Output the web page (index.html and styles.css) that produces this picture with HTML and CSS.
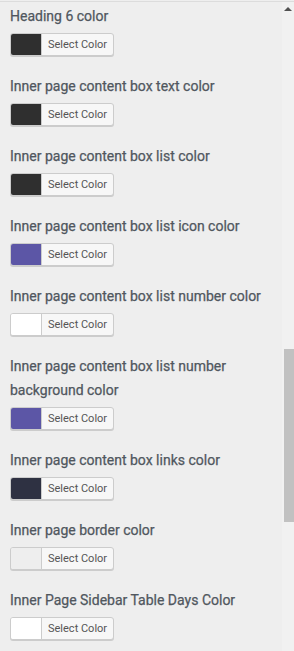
FILE: index.html
```html
<!DOCTYPE html>
<html lang="en">
<head>
<meta charset="UTF-8">
<meta name="viewport" content="width=device-width, initial-scale=1.0">
<title>Customizer Colors</title>
<link rel="stylesheet" href="styles.css">
</head>
<body>
<div class="panel">
  <div class="controls">
    <div class="control">
      <span class="control-title">Heading 6 color</span>
      <button class="color-result"><span class="swatch" style="background:#2f2f2f"></span><span class="result-text">Select Color</span></button>
    </div>
    <div class="control">
      <span class="control-title">Inner page content box text color</span>
      <button class="color-result"><span class="swatch" style="background:#2f2f2f"></span><span class="result-text">Select Color</span></button>
    </div>
    <div class="control">
      <span class="control-title">Inner page content box list color</span>
      <button class="color-result"><span class="swatch" style="background:#2f2f2f"></span><span class="result-text">Select Color</span></button>
    </div>
    <div class="control">
      <span class="control-title">Inner page content box list icon color</span>
      <button class="color-result"><span class="swatch" style="background:#5c56a6"></span><span class="result-text">Select Color</span></button>
    </div>
    <div class="control">
      <span class="control-title">Inner page content box list number color</span>
      <button class="color-result"><span class="swatch" style="background:#ffffff"></span><span class="result-text">Select Color</span></button>
    </div>
    <div class="control">
      <span class="control-title">Inner page content box list number background color</span>
      <button class="color-result"><span class="swatch" style="background:#5c56a6"></span><span class="result-text">Select Color</span></button>
    </div>
    <div class="control">
      <span class="control-title">Inner page content box links color</span>
      <button class="color-result"><span class="swatch" style="background:#2e3142"></span><span class="result-text">Select Color</span></button>
    </div>
    <div class="control">
      <span class="control-title">Inner page border color</span>
      <button class="color-result"><span class="swatch" style="background:#eeeeee"></span><span class="result-text">Select Color</span></button>
    </div>
    <div class="control">
      <span class="control-title">Inner Page Sidebar Table Days Color</span>
      <button class="color-result"><span class="swatch" style="background:#ffffff"></span><span class="result-text">Select Color</span></button>
    </div>
  </div>
  <div class="scrollbar">
    <span class="arrow"></span>
    <span class="thumb"></span>
  </div>
</div>
</body>
</html>
```

FILE: styles.css
```css
body {
  margin: 0;
  padding: 0;
  background: #eeeeee;
  font-family: Roboto, "Liberation Sans", Arial, sans-serif;
  overflow: hidden;
}

.panel {
  display: flex;
  height: 651px;
  border-top: 1px solid #dcdcdc;
  margin-top: 1px;
  box-sizing: border-box;
}

.controls {
  flex: 1;
  padding: 2px 0 0 10px;
}

.control {
  display: flex;
  flex-direction: column;
  align-items: flex-start;
  padding-bottom: 18px;
}

.control-title {
  font-size: 14px;
  font-weight: 400;
  line-height: 24px;
  color: #50575e;
  width: 262px;
  margin-bottom: 5px;
  -webkit-text-stroke: 0.25px #50575e;
}

.color-result {
  display: flex;
  align-items: stretch;
  height: 23px;
  padding: 0;
  margin: 0;
  border: 1px solid #cccccc;
  border-radius: 3px;
  background: #f7f7f7;
  box-shadow: 0 1px 0 #cccccc;
  overflow: hidden;
  cursor: pointer;
  box-sizing: border-box;
}

.swatch {
  width: 30px;
  border-right: 1px solid #cccccc;
}

.result-text {
  padding: 0 6px 0 6px;
  font-family: Roboto, "Liberation Sans", Arial, sans-serif;
  font-size: 11px;
  line-height: 21px;
  color: #555555;
}

.scrollbar {
  width: 12px;
  background: #f1f1f1;
  display: flex;
  flex-direction: column;
  align-items: flex-end;
}

.arrow {
  width: 0;
  height: 0;
  margin: 5px 2px 0 0;
  border-left: 4px solid transparent;
  border-right: 4px solid transparent;
  border-bottom: 4px solid #505050;
}

.thumb {
  width: 10px;
  height: 173px;
  margin-top: 338px;
  background: #c1c1c1;
}
```
